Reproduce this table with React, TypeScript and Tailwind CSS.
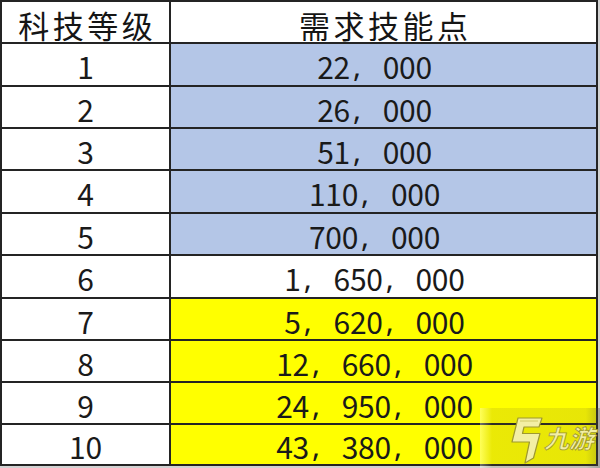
import React from "react";

type Row = { lv: string; val: string; bg: string; h: string };

const rows: Row[] = [
  { lv: "1", val: "22, 000", bg: "bg-[#b4c6e7]", h: "h-[43px]" },
  { lv: "2", val: "26, 000", bg: "bg-[#b4c6e7]", h: "h-[42px]" },
  { lv: "3", val: "51, 000", bg: "bg-[#b4c6e7]", h: "h-[42px]" },
  { lv: "4", val: "110, 000", bg: "bg-[#b4c6e7]", h: "h-[43px]" },
  { lv: "5", val: "700, 000", bg: "bg-[#b4c6e7]", h: "h-[42px]" },
  { lv: "6", val: "1, 650, 000", bg: "bg-white", h: "h-[43px]" },
  { lv: "7", val: "5, 620, 000", bg: "bg-[#ffff00]", h: "h-[42px]" },
  { lv: "8", val: "12, 660, 000", bg: "bg-[#ffff00]", h: "h-[42px]" },
  { lv: "9", val: "24, 950, 000", bg: "bg-[#ffff00]", h: "h-[42px]" },
  { lv: "10", val: "43, 380, 000", bg: "bg-[#ffff00]", h: "h-[41px]" },
];

const numFont = {
  fontFamily: '"Noto Sans CJK SC", "Noto Sans", sans-serif',
};

function Mono({ text }: { text: string }) {
  return (
    <span className="flex text-[30px] font-normal leading-none text-[#1a1a1a] pt-[3px]" style={numFont}>
      {text.split("").map((c, i) =>
        c === "," ? (
          <span key={i} className="inline-block w-[16.4px] text-left pl-[3px]" style={{ fontFamily: '"Noto Sans", sans-serif' }}>
            ,
          </span>
        ) : (
          <span key={i} className="inline-block w-[16.4px] text-center">
            {c === " " ? "\u00a0" : c}
          </span>
        )
      )}
    </span>
  );
}

export default function App() {
  return (
    <div className="relative w-[600px] h-[468px] bg-[#d2d2d2] overflow-hidden">
      <div className="w-[598px] border-t-2 border-[#242424] bg-white">
        <div className="flex h-[42px] border-b-2 border-[#242424]">
          <div className="w-[171px] border-l-2 border-r-2 border-[#242424] flex items-center justify-center bg-white">
            <span
              className="text-[31px] leading-none text-[#151515] tracking-[3.5px] pl-[3.5px] pt-[4px]"
              style={numFont}
            >
              科技等级
            </span>
          </div>
          <div className="flex-1 border-r-2 border-[#242424] flex items-center justify-center bg-white">
            <span
              className="text-[31px] leading-none text-[#151515] tracking-[3.5px] pl-[3.5px] pt-[4px]"
              style={numFont}
            >
              需求技能点
            </span>
          </div>
        </div>
        {rows.map((r) => (
          <div key={r.lv} className={`flex border-b-2 border-[#242424] ${r.h}`}>
            <div className="w-[171px] border-l-2 border-r-2 border-[#242424] flex items-center justify-center bg-white">
              <Mono text={r.lv} />
            </div>
            <div className={`flex-1 border-r-2 border-[#242424] flex items-center justify-center pr-[18px] ${r.bg}`}>
              <Mono text={r.val} />
            </div>
          </div>
        ))}
      </div>

      {/* watermark */}
      <div className="absolute left-[480px] top-[408px] w-[120px] h-[60px] bg-[linear-gradient(to_right,rgba(255,255,255,0.35),rgba(110,100,40,0.14)_10%,rgba(110,100,40,0.16)_88%,rgba(70,70,60,0.35))]">
        <svg className="absolute left-[28px] top-[8px]" width="38" height="48" viewBox="0 0 38 48">
          <path
            d="M10 2 H34 L31 11 H16 L14.5 17.5 H32 L25.5 42 L17 47 L21.5 26 H4 Z"
            fill="#f3efa4"
            stroke="#9e9830"
            strokeWidth="1.2"
            strokeLinejoin="round"
          />
          <path d="M12 5 H30" stroke="#c9c25a" strokeWidth="0.8" fill="none" />
        </svg>
        <span
          className="absolute left-[64px] top-[17px] text-[25px] leading-none font-bold italic text-[#f3efa4]"
          style={{
            fontFamily: '"Noto Sans CJK SC", sans-serif',
            WebkitTextStroke: "0.8px #9e9830",
          }}
        >
          九游
        </span>
      </div>
    </div>
  );
}
